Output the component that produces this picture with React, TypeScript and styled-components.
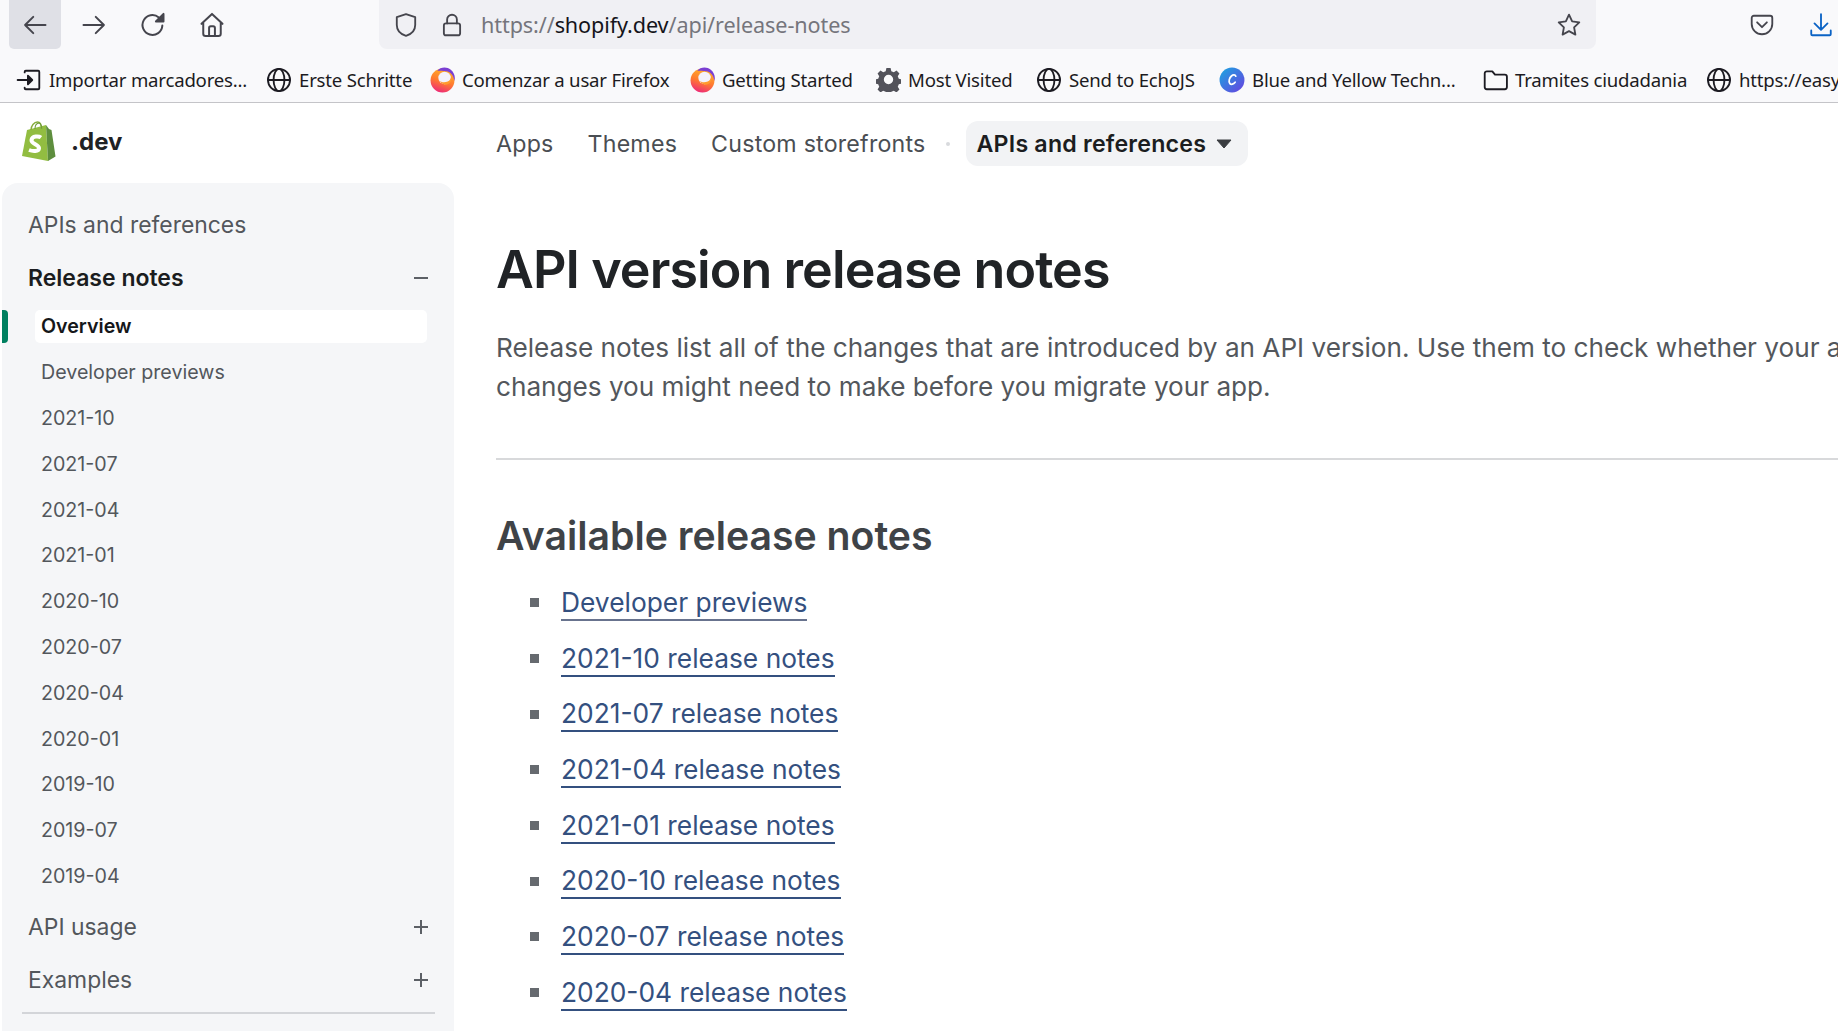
import React from "react";
import styled, {createGlobalStyle} from "styled-components";

const Global = createGlobalStyle`
    html, body {
        margin: 0;
        padding: 0;
        height: 100%;
        overflow: hidden;
        background: #fff;
    }
    * {
        box-sizing: border-box;
    }
`
const Page = styled.div`
    width: 1838px;
    height: 1031px;
    overflow: hidden;
    display: flex;
    flex-direction: column;
    font-family: Inter, "Liberation Sans", sans-serif;
`
const Chrome = styled.header`
    flex: none;
    height: 103px;
    background: #f9f9fb;
    border-bottom: 1px solid #c4c4c8;
    font-family: "Noto Sans", "Open Sans", sans-serif;
    color: #15141a;
`
const Toolbar = styled.div`
    height: 50px;
    display: flex;
    align-items: flex-start;
    padding-left: 9px;
`
const NavButton = styled.div<{$active?: boolean}>`
    flex: none;
    width: 52px;
    height: 49px;
    margin-right: 7px;
    display: flex;
    align-items: center;
    justify-content: center;
    border-radius: 0 0 5px 5px;
    color: #45454d;
    background: ${p => p.$active ? "#dfe0e6" : "transparent"};
`
const UrlBar = styled.div`
    flex: none;
    width: 1217px;
    height: 49px;
    margin-left: 134px;
    border-radius: 0 0 8px 8px;
    background: #f0f0f4;
    display: flex;
    align-items: center;
    padding: 0 14px 0 14px;
    color: #45454d;
`
const LockSlot = styled.span`
    display: flex;
    margin-left: 20px;
    margin-right: 16px;
`
const UrlText = styled.div`
    flex: 1;
    font-size: 21.6px;
    color: #75757c;
    letter-spacing: -0.1px;
    b {
        font-weight: 400;
        color: #15141a;
    }
`
const ToolRight = styled.div`
    flex: 1;
    height: 49px;
    display: flex;
    align-items: center;
    justify-content: flex-end;
    gap: 33px;
    padding-right: 4px;
    color: #45454d;
`
const Bookmarks = styled.div`
    height: 52px;
    display: flex;
    align-items: center;
    padding-left: 16px;
    white-space: nowrap;
    overflow: hidden;
    padding-top: 7px;
`
const Bookmark = styled.div<{$left: number}>`
    flex: none;
    width: ${p => p.$left}px;
    display: flex;
    align-items: center;
    gap: 7px;
    font-size: 18.6px;
    color: #1c1b22;
    letter-spacing: -0.2px;
    svg {
        flex: none;
    }
`
const Body = styled.div`
    flex: 1;
    min-height: 0;
    display: flex;
`
const LeftColumn = styled.aside`
    flex: none;
    width: 496px;
    padding-left: 2px;
    display: flex;
    flex-direction: column;
`
const Brand = styled.div`
    height: 80px;
    padding: 0 0 4px 19px;
    display: flex;
    align-items: center;
    gap: 15px;
    font-size: 24px;
    font-weight: 700;
    color: #1f2225;
`
const Sidebar = styled.nav`
    flex: 1;
    width: 452px;
    padding: 22px 0 0 0;
    background: #f5f6f8;
    border-radius: 16px 16px 0 0;
    display: flex;
    flex-direction: column;
    gap: 13px;
`
const Section = styled.div<{$open?: boolean}>`
    height: 40px;
    padding: 0 26px 0 26px;
    display: flex;
    align-items: center;
    justify-content: space-between;
    font-size: ${p => p.$open ? "23px" : "22.9px"};
    font-weight: ${p => p.$open ? 600 : 400};
    color: ${p => p.$open ? "#1b1d20" : "#53575c"};
`
const SubList = styled.div`
    display: flex;
    flex-direction: column;
    gap: 13px;
    margin-top: -1px;
    padding: 0 27px 2px 0;
`
const SubItem = styled.div<{$current?: boolean}>`
    position: relative;
    height: 32.8px;
    margin-left: 33px;
    padding-left: 6px;
    display: flex;
    align-items: center;
    border-radius: 5px;
    font-size: 19.65px;
    font-weight: ${p => p.$current ? 600 : 400};
    color: ${p => p.$current ? "#15171a" : "#53575c"};
    background: ${p => p.$current ? "#fff" : "transparent"};
    &::before {
        content: "";
        display: ${p => p.$current ? "block" : "none"};
        position: absolute;
        left: -33px;
        top: 0;
        width: 6px;
        height: 100%;
        border-radius: 0 4px 4px 0;
        background: #008060;
    }
`
const SideRule = styled.hr`
    margin: -1px 19px 0 20px;
    border: none;
    border-top: 2px solid #d3d5d9;
`
const Right = styled.main`
    flex: 1;
    min-width: 0;
`
const TopNav = styled.div`
    height: 81px;
    display: flex;
    align-items: center;
    font-size: 23.2px;
    letter-spacing: 0.22px;
    color: #4a4e53;
`
const TopLink = styled.a`
    margin-right: 34px;
`
const Dot = styled.span`
    width: 4px;
    height: 4px;
    margin-left: -14px;
    margin-right: 16px;
    border-radius: 50%;
    background: #d8dadd;
`
const ActivePill = styled.div`
    height: 45px;
    width: 282px;
    padding-left: 11px;
    display: flex;
    align-items: center;
    gap: 10px;
    border-radius: 12px;
    background: #f2f3f5;
    font-weight: 600;
    letter-spacing: 0.2px;
    color: #1b1d20;
`
const Title = styled.h1`
    margin: 55px 0 0;
    font-size: 52px;
    line-height: 62px;
    font-weight: 600;
    letter-spacing: -0.92px;
    color: #202326;
`
const Lead = styled.p`
    margin: 27px 0 0;
    font-size: 26.15px;
    line-height: 39px;
    white-space: nowrap;
    color: #53575c;
`
const Rule = styled.hr`
    margin: 52px 0 0;
    border: none;
    border-top: 2px solid #d8d9db;
`
const Subtitle = styled.h2`
    margin: 52px 0 0;
    font-size: 39.2px;
    line-height: 48px;
    font-weight: 600;
    color: #3f4347;
`
const Notes = styled.ul`
    margin: 15px 0 0;
    padding: 0 0 0 34px;
    list-style: none;
`
const Note = styled.li`
    height: 55.7px;
    display: flex;
    align-items: center;
    gap: 22px;
    &::before {
        content: "";
        width: 9px;
        height: 9px;
        background: #666a6f;
    }
`
const NoteLink = styled.a<{$soft?: boolean}>`
    font-size: 26.35px;
    line-height: 34px;
    color: #34507f;
    border-bottom: 2px solid ${p => p.$soft ? "#68738e" : "#34507f"};
`

const Ico: React.FC<{size?: number, children: React.ReactNode, color?: string}> = ({size = 26, children, color = "currentColor"}) => (
    <svg width={size} height={size} viewBox="0 0 24 24" fill="none" stroke={color} strokeWidth="1.7" strokeLinecap="round" strokeLinejoin="round">
        {children}
    </svg>
)
const Globe = () => (
    <Ico>
        <circle cx="12" cy="12" r="10.2"/>
        <ellipse cx="12" cy="12" rx="5" ry="10.2"/>
        <path d="M2 12h20"/>
    </Ico>
)
const Firefox: React.FC<{id: string}> = ({id}) => (
    <svg width="25" height="27" viewBox="0 0 24 26">
        <defs>
            <linearGradient id={id} x1="0.7" y1="0" x2="0.35" y2="1">
                <stop offset="0" stopColor="#ffb52e"/>
                <stop offset="0.55" stopColor="#ff7a30"/>
                <stop offset="1" stopColor="#ee2a78"/>
            </linearGradient>
        </defs>
        <circle cx="12" cy="14" r="11.5" fill={`url(#${id})`}/>
        <circle cx="14" cy="11.5" r="6" fill="#f4f1fb"/>
        <path d="M7 4.500C10 1 16 .5 20 3.500c3.500 3 4.500 7 3.500 11-.5-5-3.500-9-8-9.500-3-.3-5.500-.2-8.500-.5z" fill="#7b3fd3"/>
        <path d="M20.500 10c1 4-1.500 8-5.500 8-2.500 0-4.500-1.500-5.500-3.500 2 1.500 5 1.500 7.500.5 2-1 3.200-3 3.500-5z" fill="#ff9a2e"/>
    </svg>
)
const Gear = () => (
    <svg width="25" height="25" viewBox="0 0 24 24">
        <path fill="#52525a" fillRule="evenodd" d="M10 1h4l.7 3 2.400 1 2.600-1.600 2.800 2.800-1.600 2.600 1 2.400 3 .7v4l-3 .7-1 2.400 1.600 2.600-2.800 2.800-2.600-1.600-2.400 1-.7 3h-4l-.7-3-2.400-1-2.600 1.600-2.800-2.800 1.600-2.600-1-2.400-3-.7v-4l3-.7 1-2.400-1.600-2.600 2.800-2.800 2.600 1.600 2.400-1zM12 7.500a4.500 4.500 0 1 0 0 9 4.500 4.500 0 0 0 0-9z"/>
    </svg>
)
const Canva = () => (
    <svg width="26" height="26" viewBox="0 0 24 24">
        <defs>
            <linearGradient id="canvaGrad" x1="0" y1="0" x2="1" y2="1">
                <stop offset="0" stopColor="#18a8e0"/>
                <stop offset="1" stopColor="#6a3fe0"/>
            </linearGradient>
        </defs>
        <circle cx="12" cy="12" r="11.500" fill="url(#canvaGrad)"/>
        <path d="M15.500 8.500c-.5-1.500-2.500-1.500-4-.2-2 1.700-2.800 5-1.600 6.800 1.200 1.600 3.600.7 5-1.100" fill="none" stroke="#fff" strokeWidth="1.600" strokeLinecap="round"/>
    </svg>
)
const ShopifyBag = () => (
    <svg width="35" height="40" viewBox="0 0 35 40">
        <path d="M6 9 L25 4 L27 40 L1 35 Z" fill="#92bd41"/>
        <path d="M25 4 L28 8 L30.500 9 L34.500 35.500 L27 40 Z" fill="#5e8e3e"/>
        <path d="M10 9c0-4 3-8 6.500-8 3 0 4 3 4 7" fill="none" stroke="#86ad3c" strokeWidth="1.400"/>
        <path d="M14 8c0-3 1.500-5.500 3.500-6 2.500 0 3 3.500 3.200 5.500" fill="none" stroke="#6f9c3d" strokeWidth="1.100"/>
        <path d="M20 16.500c-2-1.500-9-2-9.500 2.500-.5 4 8 4.500 7.500 8.500-.4 3-6 3-10 1.500" fill="none" stroke="#fff" strokeWidth="4"/>
    </svg>
)
const PlusMinus: React.FC<{plus?: boolean}> = ({plus}) => (
    <svg width="14" height="14" viewBox="0 0 14 14" stroke="#5c6066" strokeWidth="2">
        <path d="M0 7h14"/>
        {plus && <path d="M7 0v14"/>}
    </svg>
)

const subItems = ["Developer previews", "2021-10", "2021-07", "2021-04", "2021-01", "2020-10", "2020-07", "2020-04", "2020-01", "2019-10", "2019-07", "2019-04"]
const notes = ["2021-10", "2021-07", "2021-04", "2021-01", "2020-10", "2020-07", "2020-04"]

const App: React.FC = () => {
    return (
        <Page>
            <Global/>
            <Chrome>
                <Toolbar>
                    <NavButton $active><Ico size={28}><path d="M21 12H3.500M10.500 5l-7 7 7 7"/></Ico></NavButton>
                    <NavButton><Ico size={28}><path d="M3 12h17.500M13.500 5l7 7-7 7"/></Ico></NavButton>
                    <NavButton><Ico size={28}><path d="M20 12.500A8.500 8.500 0 1 1 17 5.500"/><path d="M21 2.500v6.500h-6.500z" fill="currentColor"/></Ico></NavButton>
                    <NavButton><Ico size={28}><path d="M3 11 12 2.500 21 11M4.500 10v9.500a2 2 0 0 0 2 2h11a2 2 0 0 0 2-2V10"/><path d="M9.500 21.500v-7a1.500 1.500 0 0 1 1.500-1.500h2a1.500 1.500 0 0 1 1.500 1.500v7"/></Ico></NavButton>
                    <UrlBar>
                        <Ico><path d="M12 2 3.500 4.800v7.200c0 5 3.500 8.500 8.500 10 5-1.500 8.500-5 8.500-10V4.800z"/></Ico>
                        <LockSlot>
                            <Ico><rect x="4.500" y="10.500" width="15" height="11" rx="2"/><path d="M7.500 10.500V7a4.500 4.500 0 0 1 9 0v3.500"/></Ico>
                        </LockSlot>
                        <UrlText>https://<b>shopify.dev</b>/api/release-notes</UrlText>
                        <Ico><path d="m12 2.500 2.900 6.200 6.600.9-4.800 4.600 1.200 6.700L12 17.700l-5.900 3.200 1.200-6.700L2.500 9.600l6.600-.9z"/></Ico>
                    </UrlBar>
                    <ToolRight>
                        <Ico><path d="M4.500 3.500h15a2 2 0 0 1 2 2V11c0 5.500-4.500 9.500-9.500 9.500S2.500 16.500 2.500 11V5.500a2 2 0 0 1 2-2z"/><path d="m7.500 9.500 4.500 4.500 4.500-4.500"/></Ico>
                        <Ico color="#0b63c5"><path d="M12 2v14M6 10.500l6 6 6-6M3 17v3.500a1 1 0 0 0 1 1h16a1 1 0 0 0 1-1V17"/></Ico>
                    </ToolRight>
                </Toolbar>
                <Bookmarks>
                    <Bookmark $left={250}><Ico><path d="M8 5V4.500a1 1 0 0 1 1-1h11.500a1 1 0 0 1 1 1v15a1 1 0 0 1-1 1H9a1 1 0 0 1-1-1V19"/><path d="M1.500 12H11"/><path d="M11 8l4 4-4 4z" fill="currentColor"/></Ico>Importar marcadores...</Bookmark>
                    <Bookmark $left={164}><Globe/>Erste Schritte</Bookmark>
                    <Bookmark $left={260}><Firefox id="fx1"/>Comenzar a usar Firefox</Bookmark>
                    <Bookmark $left={186}><Firefox id="fx2"/>Getting Started</Bookmark>
                    <Bookmark $left={160}><Gear/>Most Visited</Bookmark>
                    <Bookmark $left={183}><Globe/>Send to EchoJS</Bookmark>
                    <Bookmark $left={263}><Canva/>Blue and Yellow Techn...</Bookmark>
                    <Bookmark $left={224}><Ico><path d="M2.500 6a2 2 0 0 1 2-2h5l2.500 3h9a2 2 0 0 1 2 2v9.500a2 2 0 0 1-2 2h-16.500a2 2 0 0 1-2-2z"/></Ico>Tramites ciudadania</Bookmark>
                    <Bookmark $left={140}><Globe/>https://easy</Bookmark>
                </Bookmarks>
            </Chrome>
            <Body>
                <LeftColumn>
                    <Brand><ShopifyBag/>.dev</Brand>
                    <Sidebar>
                        <Section>APIs and references</Section>
                        <Section $open>Release notes<PlusMinus/></Section>
                        <SubList>
                            <SubItem $current>Overview</SubItem>
                            {subItems.map(item => <SubItem key={item}>{item}</SubItem>)}
                        </SubList>
                        <Section>API usage<PlusMinus plus/></Section>
                        <Section>Examples<PlusMinus plus/></Section>
                        <SideRule/>
                    </Sidebar>
                </LeftColumn>
                <Right>
                    <TopNav>
                        <TopLink>Apps</TopLink>
                        <TopLink>Themes</TopLink>
                        <TopLink>Custom storefronts</TopLink>
                        <Dot/>
                        <ActivePill>
                            APIs and references
                            <svg width="16" height="10" viewBox="0 0 16 10"><path d="M1 1h14L8 9z" fill="#3a3d41" stroke="#3a3d41" strokeLinejoin="round"/></svg>
                        </ActivePill>
                    </TopNav>
                    <Title>API version release notes</Title>
                    <Lead>
                        Release notes list all of the changes that are introduced by an API version. Use them to check whether your app is affected by any<br/>
                        changes you might need to make before you migrate your app.
                    </Lead>
                    <Rule/>
                    <Subtitle>Available release notes</Subtitle>
                    <Notes>
                        <Note><NoteLink $soft>Developer previews</NoteLink></Note>
                        {notes.map(v => <Note key={v}><NoteLink>{v} release notes</NoteLink></Note>)}
                    </Notes>
                </Right>
            </Body>
        </Page>
    )
}
export default App
